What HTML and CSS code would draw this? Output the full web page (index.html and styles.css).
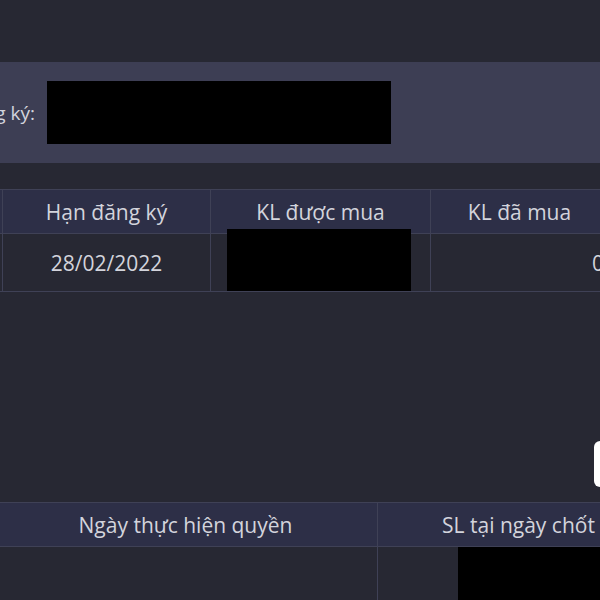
FILE: index.html
```html
<!DOCTYPE html>
<html>
<head>
<meta charset="utf-8">
<link rel="stylesheet" href="styles.css">
</head>
<body>
<div class="page">
    <div class="top-space"></div>

    <div class="reg-bar">
        <span class="reg-label">Hạn đăng ký:</span>
        <span class="redact reg-value"></span>
    </div>

    <table class="grid grid-rights">
        <colgroup>
            <col style="width: 122px">
            <col style="width: 208px">
            <col style="width: 220px">
            <col style="width: 178px">
            <col style="width: 120px">
        </colgroup>
        <thead>
            <tr>
                <th>Mã CK</th>
                <th>Hạn đăng ký</th>
                <th>KL được mua</th>
                <th>KL đã mua</th>
                <th>KL còn lại</th>
            </tr>
        </thead>
        <tbody>
            <tr>
                <td></td>
                <td>28/02/2022</td>
                <td class="hidden-cell"><span class="redact cell-redact"></span></td>
                <td class="num">0</td>
                <td></td>
            </tr>
        </tbody>
    </table>

    <div class="actions">
        <button class="btn-light">Đăng ký</button>
    </div>

    <table class="grid grid-history">
        <colgroup>
            <col style="width: 384px">
            <col style="width: 282px">
            <col style="width: 150px">
        </colgroup>
        <thead>
            <tr>
                <th>Ngày thực hiện quyền</th>
                <th>SL tại ngày chốt</th>
                <th>Tỷ lệ</th>
            </tr>
        </thead>
        <tbody>
            <tr>
                <td></td>
                <td class="hidden-cell right"><span class="redact cell-redact wide"></span></td>
                <td></td>
            </tr>
            <tr>
                <td></td>
                <td></td>
                <td></td>
            </tr>
        </tbody>
    </table>
</div>
</body>
</html>
```

FILE: styles.css
```css
body {
    margin: 0;
    background: #272833;
    font-family: "Open Sans", "Noto Sans", sans-serif;
    color: #d3d4dc;
    overflow: hidden;
}

.page {
    margin-left: -120px;
    width: 834px;
}

.top-space {
    height: 62px;
}

.reg-bar {
    height: 101px;
    background: #3d3e54;
    display: flex;
    align-items: center;
    gap: 12px;
}

.reg-label {
    width: 155px;
    text-align: right;
    font-size: 19px;
    white-space: nowrap;
}

.redact {
    display: block;
    background: #000;
}

.reg-value {
    width: 344px;
    height: 63px;
}

.grid {
    border-collapse: collapse;
    table-layout: fixed;
    font-size: 21px;
}

.grid-rights {
    width: 848px;
    margin-top: 26px;
}

.grid-history {
    width: 816px;
    margin-left: 113px;
}

.grid th,
.grid td {
    border: 1px solid #3f4156;
    text-align: center;
    padding: 0;
    white-space: nowrap;
}

.grid th {
    background: #2d2f47;
    font-weight: normal;
    height: 43px;
}

.grid-rights td {
    height: 57px;
}

.grid td.num {
    text-align: right;
    padding-right: 4px;
}

.grid td.hidden-cell {
    padding: 0 19px 0 16px;
    vertical-align: top;
}

.cell-redact {
    position: relative;
    height: 62px;
    margin-top: -5px;
}

.grid td.right {
    padding: 0 0 0 80px;
}

.cell-redact.wide {
    width: 202px;
    height: 60px;
    margin-top: 0;
}

.grid-history td {
    height: 41px;
}

.actions {
    height: 210px;
    display: flex;
    justify-content: flex-end;
    align-items: flex-start;
    padding-right: 20px;
}

.btn-light {
    margin-top: 149px;
    width: 100px;
    height: 46px;
    border: none;
    border-radius: 6px;
    background: #fff;
    font-size: 16px;
}
```
